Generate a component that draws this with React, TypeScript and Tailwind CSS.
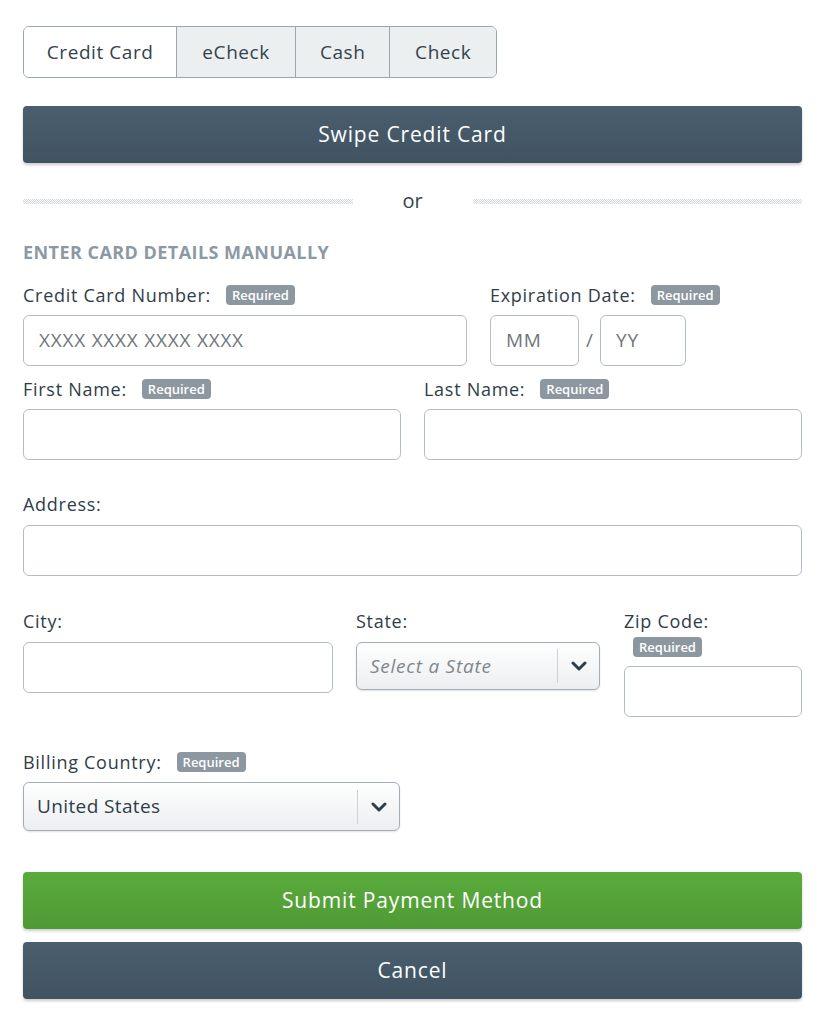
import React from "react"

const font = { fontFamily: "'Open Sans', Lato, sans-serif" }

const Required = () => (
  <span className="inline-flex h-[20px] items-center rounded-[4px] bg-[#8c979f] px-[6px] text-[13px] font-semibold leading-none tracking-normal text-white">
    Required
  </span>
)

const Label = ({ text, required }: { text: string; required?: boolean }) => (
  <div className="flex h-[20px] items-center gap-x-[15px] text-[18px] leading-none tracking-[0.04em] text-[#2f3d48]">
    <span>{text}</span>
    {required && <Required />}
  </div>
)

const TextInput = ({ placeholder, className = "" }: { placeholder?: string; className?: string }) => (
  <div
    className={`flex h-[51px] items-center rounded-[6px] border border-[#b4bdc5] bg-white px-[15px] text-[19px] tracking-[0.04em] text-[#6f767b] ${className}`}
  >
    {placeholder}
  </div>
)

const Chevron = () => (
  <svg width="16" height="10" viewBox="0 0 16 10" fill="none">
    <path d="M2 2l6 6 6-6" stroke="#2f3d48" strokeWidth="3" strokeLinecap="round" strokeLinejoin="round" />
  </svg>
)

const Select = ({ value, placeholder, className = "" }: { value: string; placeholder?: boolean; className?: string }) => (
  <div
    className={`flex items-center rounded-[6px] border border-[#a3adb5] bg-gradient-to-b from-white to-[#eceef0] shadow-[0_1px_2px_rgba(0,0,0,0.12)] ${className}`}
  >
    <span
      className={`flex-1 pl-[13px] text-[19px] ${
        placeholder ? "italic tracking-[0.04em] text-[#80878c]" : "tracking-[0.02em] text-[#2f3d48]"
      }`}
    >
      {value}
    </span>
    <div className="h-[34px] w-px bg-[#cdd2d6]" />
    <div className="flex w-[41px] items-center justify-center">
      <Chevron />
    </div>
  </div>
)

const Dotted = () => (
  <div className="h-[5px] flex-1 bg-[conic-gradient(#d3d8dc_25%,transparent_0_50%,#d3d8dc_0_75%,transparent_0)] bg-[length:2px_2px]" />
)

const tabs = ["Credit Card", "eCheck", "Cash", "Check"]
const tabWidths = ["w-[153px]", "w-[119px]", "w-[95px]", "w-[107px]"]

export default function App() {
  return (
    <div className="min-h-screen bg-white px-[23px] pt-[26px]" style={font}>
      {/* payment type tabs */}
      <div className="flex h-[52px] w-[474px] overflow-hidden rounded-[6px] border border-[#9ba6ae]">
        {tabs.map((t, i) => (
          <div
            key={t}
            className={`flex items-center justify-center text-[19px] tracking-[0.03em] text-[#34424d] ${tabWidths[i]} ${
              i === 0 ? "bg-white" : "border-l border-[#9ba6ae] bg-[#eceff0]"
            }`}
          >
            {t}
          </div>
        ))}
      </div>

      <button className="mt-[28px] flex h-[57px] w-full items-center justify-center rounded-[4px] bg-gradient-to-b from-[#4a5e6e] to-[#415363] text-[21px] tracking-[0.04em] text-white shadow-[0_2px_3px_rgba(0,0,0,0.2)]">
        Swipe Credit Card
      </button>

      <div className="mt-[28px] flex h-[20px] items-center">
        <Dotted />
        <span className="w-[120px] text-center text-[20px] leading-none text-[#34424d]">or</span>
        <Dotted />
      </div>

      <div className="mt-[31px] flex h-[20px] items-center text-[18px] font-bold leading-none tracking-[0.025em] text-[#8c99a4]">
        ENTER CARD DETAILS MANUALLY
      </div>

      {/* card number + expiration */}
      <div className="mt-[23px] flex gap-x-[23px]">
        <div className="w-[444px]">
          <Label text="Credit Card Number:" required />
          <TextInput placeholder="XXXX XXXX XXXX XXXX" className="mt-[10px]" />
        </div>
        <div>
          <Label text="Expiration Date:" required />
          <div className="mt-[10px] flex items-center">
            <TextInput placeholder="MM" className="w-[89px]" />
            <span className="w-[21px] text-center text-[19px] text-[#6f767b]">/</span>
            <TextInput placeholder="YY" className="w-[86px]" />
          </div>
        </div>
      </div>

      {/* names */}
      <div className="mt-[13px] flex gap-x-[23px]">
        <div className="flex-1">
          <Label text="First Name:" required />
          <TextInput className="mt-[10px]" />
        </div>
        <div className="flex-1">
          <Label text="Last Name:" required />
          <TextInput className="mt-[10px]" />
        </div>
      </div>

      <div className="mt-[34px]">
        <Label text="Address:" />
        <TextInput className="mt-[11px]" />
      </div>

      {/* city / state / zip */}
      <div className="mt-[35px] flex items-start">
        <div className="w-[310px]">
          <Label text="City:" />
          <TextInput className="mt-[11px]" />
        </div>
        <div className="ml-[23px] w-[244px]">
          <Label text="State:" />
          <Select value="Select a State" placeholder className="mt-[11px] h-[48px]" />
        </div>
        <div className="ml-[24px] flex-1">
          <Label text="Zip Code:" />
          <div className="mt-[6px] flex h-[20px] pl-[9px]">
            <Required />
          </div>
          <TextInput className="mt-[9px]" />
        </div>
      </div>

      <div className="mt-[35px] w-[377px]">
        <Label text="Billing Country:" required />
        <Select value="United States" className="mt-[10px] h-[49px]" />
      </div>

      <button className="mt-[41px] flex h-[57px] w-full items-center justify-center rounded-[4px] bg-gradient-to-b from-[#5aab3c] to-[#509a35] text-[21px] tracking-[0.04em] text-white shadow-[0_2px_3px_rgba(0,0,0,0.2)]">
        Submit Payment Method
      </button>
      <button className="mt-[13px] flex h-[57px] w-full items-center justify-center rounded-[4px] bg-gradient-to-b from-[#4a5e6e] to-[#415363] text-[21px] tracking-[0.04em] text-white shadow-[0_2px_3px_rgba(0,0,0,0.2)]">
        Cancel
      </button>
    </div>
  )
}
